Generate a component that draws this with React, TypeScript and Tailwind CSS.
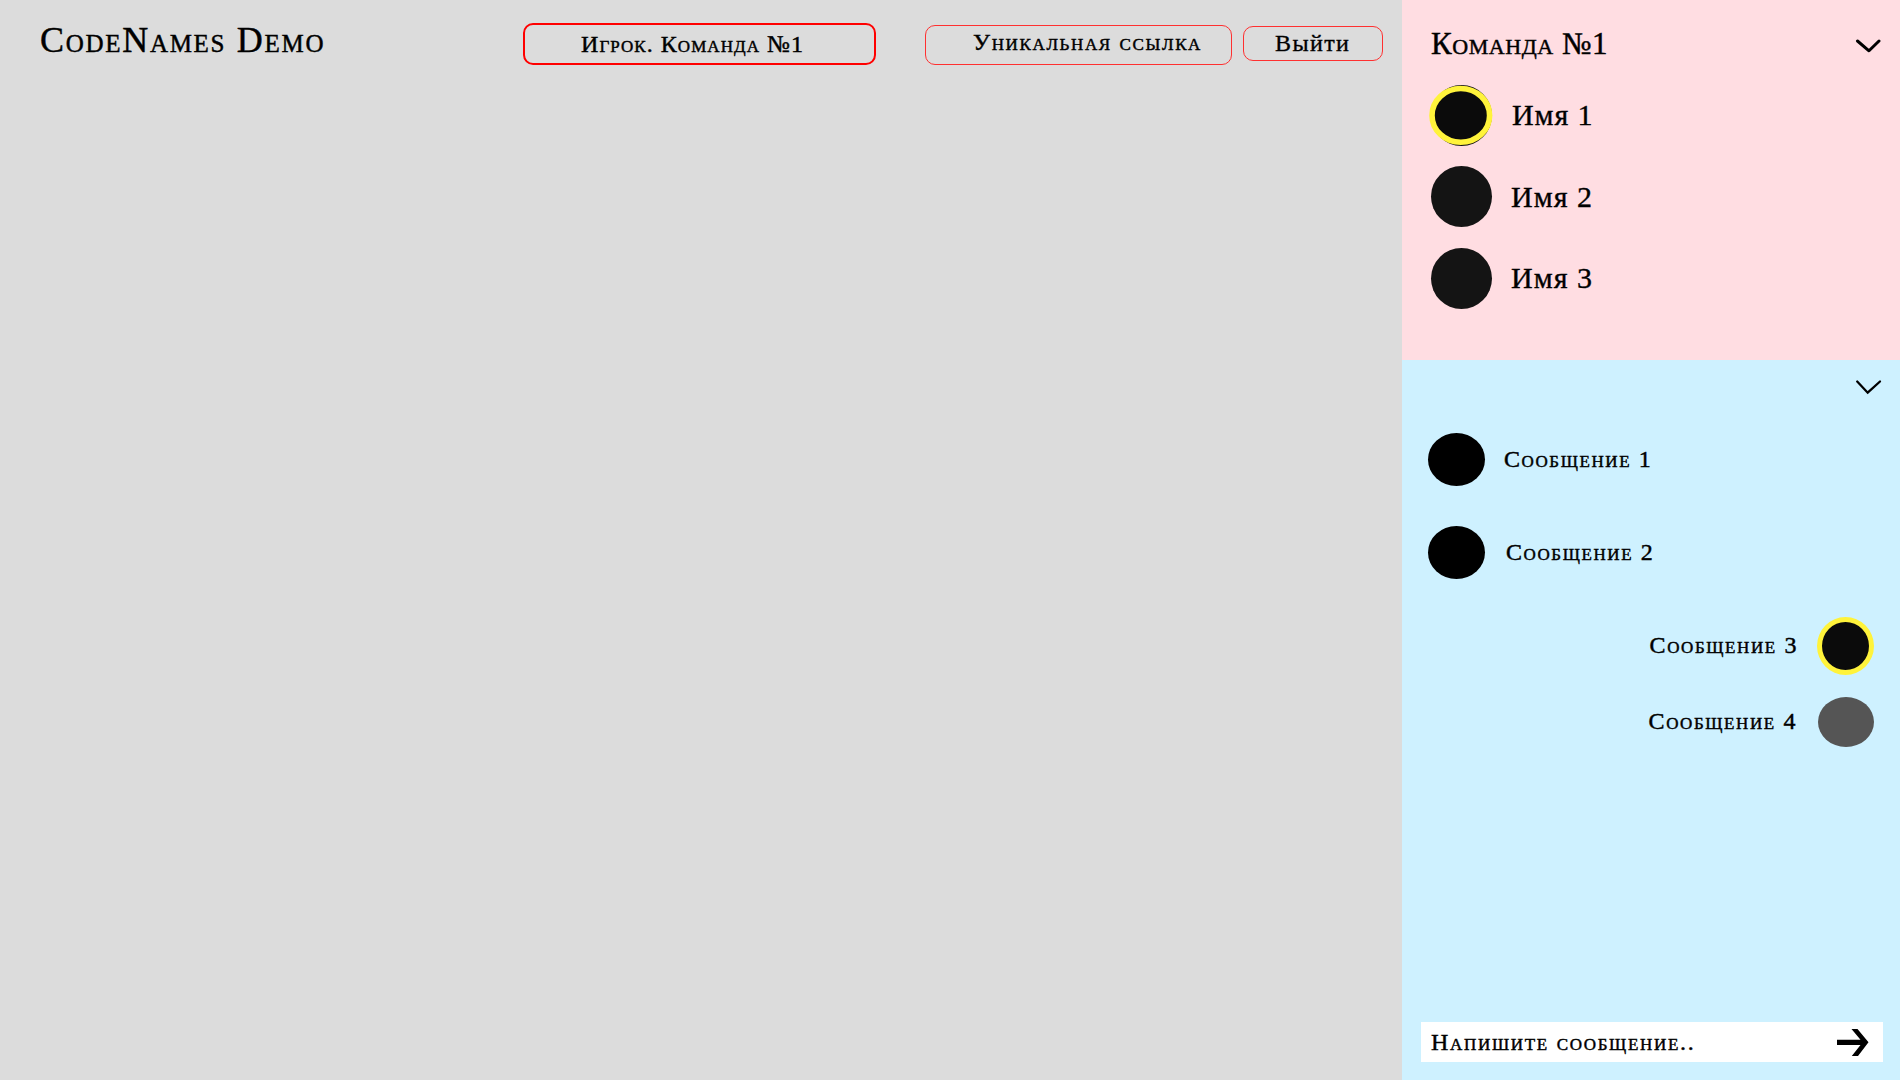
import type { ReactNode } from 'react';

const strong = '[-webkit-text-stroke:0.35px_black]';
const caps = `[font-variant:small-caps] [-webkit-text-stroke:0.45px_black]`;

function Header() {
  return (
    <header className="flex items-start">
      <h1 className={`mt-[20px] ml-[40px] w-[483px] text-[36px] leading-[40px] tracking-[1.7px] ${caps}`}>CodeNames Demo</h1>
      <button className={`mt-[23px] h-[42px] w-[353px] rounded-[10px] border-2 border-[#ff0000] pl-[56px] text-left text-[24px] leading-[38px] tracking-[1.05px] ${caps}`}>
        Игрок. Команда №1
      </button>
      <button className={`mt-[25px] ml-[49px] h-[40px] w-[307px] rounded-[10px] border border-[#ff3030] pb-[6px] pl-[47px] text-left text-[24px] leading-[32px] tracking-[1.65px] ${caps}`}>
        Уникальная ссылка
      </button>
      <button className={`mt-[26px] ml-[11px] h-[35px] w-[140px] rounded-[10px] border border-[#ff3030] pl-[31px] text-left text-[24px] leading-[33px] tracking-[1.4px] ${strong}`}>
        Выйти
      </button>
    </header>
  );
}

function Player({ avatar, children }: { avatar: ReactNode; children: ReactNode }) {
  return (
    <li className="flex h-[61px] items-center">
      {avatar}
      {children}
    </li>
  );
}

function TeamPanel() {
  return (
    <section className="h-[360px] bg-[#ffdde2] pt-[25px]">
      <div className="flex h-9 items-start justify-between pr-[19px] pl-[29px]">
        <h2 className={`mt-px text-[31px] leading-9 tracking-[0.55px] ${caps}`}>Команда №1</h2>
        <svg className="mt-[13px]" width="26" height="16" viewBox="0 0 26 16" fill="none" stroke="black" strokeWidth="3" strokeLinecap="round" strokeLinejoin="round">
          <path d="M2.5 3 L14 12.8 L24 3" />
        </svg>
      </div>
      <ul className={`mt-6 pl-[27px] text-[30px] leading-9 ${strong}`}>
        <Player
          avatar={
            <svg width="64" height="61" viewBox="0 0 64 61">
              <ellipse cx="32.5" cy="30.5" rx="30.5" ry="30.5" fill="#141414" />
              <ellipse cx="31.8" cy="30.4" rx="28.8" ry="26.9" fill="#0b0b0b" stroke="#fff33b" strokeWidth="5.6" />
            </svg>
          }
        >
          <span className="ml-[19px] pb-[2px] tracking-[0.9px]">Имя 1</span>
        </Player>
        <div className="h-5" />
        <Player avatar={<span className="ml-[2px] size-[61px] rounded-full bg-[#141414]" />}>
          <span className="ml-[19px] tracking-[1px]">Имя 2</span>
        </Player>
        <div className="h-[21px]" />
        <Player avatar={<span className="ml-[2px] size-[61px] rounded-full bg-[#141414]" />}>
          <span className="ml-[19px] pb-px tracking-[1px]">Имя 3</span>
        </Player>
      </ul>
    </section>
  );
}

function ChatPanel() {
  return (
    <section className="flex flex-1 flex-col bg-[#cef1ff] pt-[18px]">
      <div className="flex justify-end pr-[18px]">
        <svg width="27" height="18" viewBox="0 0 27 18" fill="none" stroke="black" strokeWidth="2.3" strokeLinecap="round">
          <path d="M2.2 3.5 L12.7 14.7 L25 3.5" />
        </svg>
      </div>
      <ul className={`mt-[37px] text-[24px] leading-8 tracking-[1.6px] ${caps}`}>
        <li className="flex h-[53px] items-center pl-[26px]">
          <span className="h-[53px] w-[57px] rounded-[50%] bg-black" />
          <span className="ml-[19px] pb-[2px]">Сообщение 1</span>
        </li>
        <li className="mt-10 flex h-[53px] items-center pl-[26px]">
          <span className="h-[53px] w-[57px] rounded-[50%] bg-black" />
          <span className="ml-[21px] pb-[2px]">Сообщение 2</span>
        </li>
        <li className="mt-[38px] flex h-[58px] items-center justify-end pr-[26px]">
          <span className="mr-[19px] pb-[2px]">Сообщение 3</span>
          <span className="h-[58px] w-[57px] rounded-[50%] border-[5.5px] border-[#fff33b] bg-[#0b0b0b]" />
        </li>
        <li className="mt-[22px] flex h-[50px] items-center justify-end pr-[26px]">
          <span className="mr-[21px] pb-[2px]">Сообщение 4</span>
          <span className="h-[50px] w-[56px] rounded-[50%] bg-[#555555]" />
        </li>
      </ul>
      <div className="mt-auto mb-[18px] ml-[19px] flex h-[40px] w-[462px] items-center justify-between bg-white pr-[13px] pl-[10px]">
        <span className={`text-[24px] leading-8 tracking-[1.7px] ${caps}`}>Напишите сообщение..</span>
        <svg width="33" height="28" viewBox="0 0 33 28" fill="black">
          <path d="M0 11.8H23.5L14.5 1H20.5L31.5 14.3L21 28H14.8L23.5 17.1H0Z" />
        </svg>
      </div>
    </section>
  );
}

export default function App() {
  return (
    <main className="flex h-[1080px] w-[1900px] overflow-hidden bg-[#dcdcdc] font-['Liberation_Serif',serif] whitespace-nowrap text-black">
      <div className="w-[1402px] shrink-0">
        <Header />
      </div>
      <aside className="flex w-[498px] flex-col">
        <TeamPanel />
        <ChatPanel />
      </aside>
    </main>
  );
}
